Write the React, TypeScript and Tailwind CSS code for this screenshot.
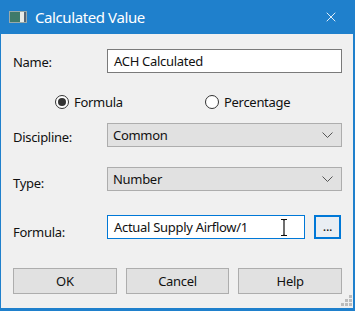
import { X } from 'lucide-react';

const font = { fontFamily: '"Noto Sans", "Open Sans", sans-serif' };

function Radio({ checked, label }: { checked?: boolean; label: string }) {
  return (
    <div className="flex items-center gap-[5px]">
      <div className="w-[14px] h-[14px] rounded-full border border-[#333] bg-white flex items-center justify-center">
        {checked && <div className="w-[8px] h-[8px] rounded-full bg-[#333]" />}
      </div>
      <span>{label}</span>
    </div>
  );
}

function Select({ value }: { value: string }) {
  return (
    <div className="flex-1 h-[24px] bg-[#e1e1e1] border border-[#adadad] flex items-center justify-between pl-[5px] pr-[8px]">
      <span>{value}</span>
      <svg width="11" height="6" viewBox="0 0 11 6" fill="none">
        <path d="M0.5 0.5 L5.5 5.5 L10.5 0.5" stroke="#555" strokeWidth="1" />
      </svg>
    </div>
  );
}

export default function App() {
  return (
    <div className="w-[355px] h-[311px] bg-[#1f80cc] flex flex-col text-[13px] leading-[18px] tracking-[-0.3px] text-[#111]" style={font}>
      {/* title bar */}
      <div className="h-[34px] flex items-center pl-[9px] pr-[16px] text-white">
        <div className="w-[18px] h-[12px] bg-[#e8ece8] border border-[#9aa] flex items-stretch mr-[8px]">
          <div className="w-[10px] bg-[#3f7a6a]" />
          <div className="flex-1" />
          <div className="w-[2px] bg-[#567]" />
        </div>
        <span className="text-[15px] tracking-[-0.4px] flex-1">Calculated Value</span>
        <X size={16} strokeWidth={1.3} />
      </div>

      {/* body */}
      <div className="flex-1 bg-[#f0f0f0] ml-[1px] mr-[2px] mb-[3px] relative flex flex-col pl-[12px] pr-[11px]">
        <div className="flex items-center mt-[15px] h-[24px]">
          <span className="w-[94px] pt-[1px]">Name:</span>
          <div className="flex-1 h-[24px] bg-white border border-[#7a7a7a] flex items-center pl-[6px]">ACH Calculated</div>
        </div>

        <div className="flex items-center mt-[22px] h-[14px]">
          <div className="ml-[42px] w-[150px]"><Radio checked label="Formula" /></div>
          <Radio label="Percentage" />
        </div>

        <div className="flex items-center mt-[14px] h-[24px]">
          <span className="w-[94px] pt-[4px]">Discipline:</span>
          <Select value="Common" />
        </div>

        <div className="flex items-center mt-[20px] h-[24px]">
          <span className="w-[94px] pt-[7px]">Type:</span>
          <Select value="Number" />
        </div>

        <div className="flex items-center mt-[24px] h-[24px]">
          <span className="w-[94px] pt-[10px]">Formula:</span>
          <div className="w-[198px] h-[24px] bg-white border border-[#0078d7] flex items-center pl-[6px] relative">
            Actual Supply Airflow/1
            <svg className="absolute left-[172px] top-[3px]" width="8" height="17" viewBox="0 0 8 17" fill="none">
              <path d="M1 0.5 H3 Q4 0.5 4 1.5 V15.5 Q4 16.5 3 16.5 H1 M7 0.5 H5 Q4 0.5 4 1.5 M4 15.5 Q4 16.5 5 16.5 H7" stroke="#111" strokeWidth="1.2" />
            </svg>
          </div>
          <div className="ml-[9px] w-[27px] h-[24px] bg-[#e9eef3] border-2 border-[#0078d7] flex items-center justify-center leading-none pb-[2px]">...</div>
        </div>

        <div className="flex mt-[29px] gap-[9px]">
          {['OK', 'Cancel', 'Help'].map((b) => (
            <div key={b} className="flex-1 h-[26px] bg-[#e1e1e1] border border-[#adadad] flex items-center justify-center">{b}</div>
          ))}
        </div>

        {/* resize grip */}
        <div className="absolute right-[1px] bottom-[2px] grid grid-cols-3 gap-[1px] w-[11px] h-[11px]">
          {[0, 0, 1, 0, 1, 1, 1, 1, 1].map((v, i) => (
            <div key={i} className={v ? 'bg-[#bcbcbc]' : ''} />
          ))}
        </div>
      </div>
    </div>
  );
}
